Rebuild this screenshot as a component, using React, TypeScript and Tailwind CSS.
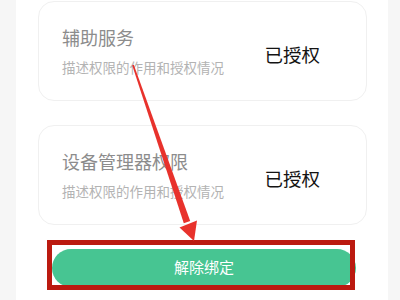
import React from "react";

const font = { fontFamily: '"Noto Sans CJK SC", "Noto Sans", sans-serif' };

function Card({ title }: { title: string }) {
  return (
    <div className="h-[100px] rounded-[16px] border border-[#f0f0f0] bg-white flex items-center pl-[23px] pr-[46px]">
      <div className="flex flex-col flex-1">
        <div className="text-[18px] leading-[22px] text-[#8c8c8c]">{title}</div>
        <div className="mt-[10px] text-[13.5px] leading-[18px] text-[#b3b3b3]">描述权限的作用和授权情况</div>
      </div>
      <div className="mt-[6px] text-[18.5px] leading-[22px] text-[#141414]">已授权</div>
    </div>
  );
}

export default function App() {
  return (
    <div className="relative w-[400px] h-[300px] overflow-hidden bg-[#f6f6f6]" style={font}>
      <div className="ml-[16px] w-[372px] h-full bg-white px-[22px] pt-[1px] flex flex-col">
        <div className="w-[329px] flex flex-col gap-[24px]">
          <Card title="辅助服务" />
          <Card title="设备管理器权限" />
        </div>
        <div className="mt-[24px] ml-[14px] w-[304px] h-[38px] rounded-full bg-[#47c592] flex items-center justify-center pb-[1px]">
          <span className="text-[15px] text-white">解除绑定</span>
        </div>
      </div>
      <div className="absolute left-[47px] top-[240px] w-[308px] h-[50px] border-[5px] border-[#bb1a10]" />
      <svg className="absolute left-0 top-0" width="400" height="300" viewBox="0 0 400 300">
        <polygon points="133.8,64.8 190.2,221 183.8,223.2 132.2,65.2" fill="#e8322c" />
        <polygon points="197,220.5 194,241 179.5,227.5" fill="#e8322c" />
      </svg>
    </div>
  );
}
